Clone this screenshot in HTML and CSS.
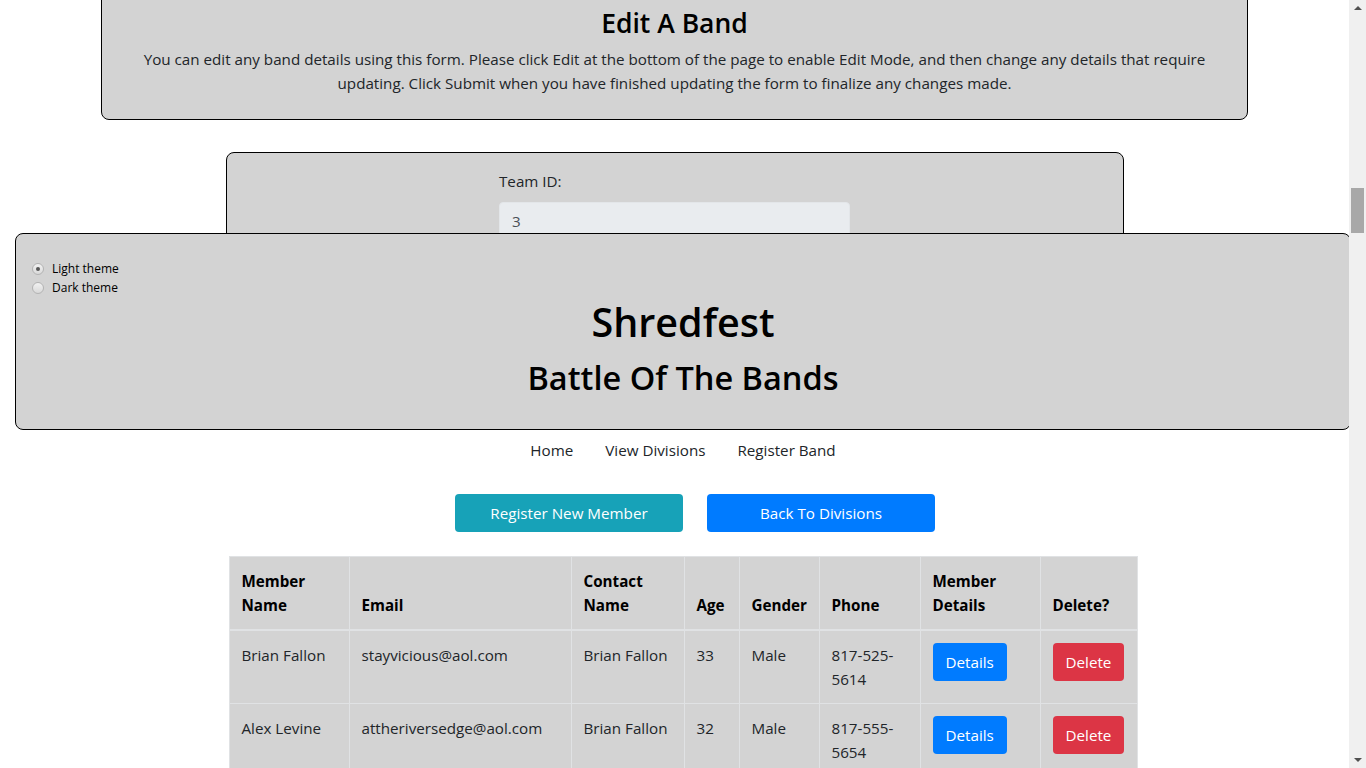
FILE: index.html
```html
<!DOCTYPE html>
<html lang="en">
<head>
<meta charset="utf-8">
<title>Edit A Band</title>
<link rel="stylesheet" href="styles.css">
</head>
<body>
<main class="page">
  <section class="intro-card">
    <h3 class="intro-title">Edit A Band</h3>
    <p class="intro-text">You can edit any band details using this form. Please click Edit at the bottom of the page to enable Edit Mode, and then change any details that require updating. Click Submit when you have finished updating the form to finalize any changes made.</p>
  </section>
  <form class="band-form">
    <div class="form-group">
      <label class="form-label" for="teamId">Team ID:</label>
      <input class="form-input" id="teamId" type="text" value="3" disabled>
    </div>
    <div class="form-group">
      <label class="form-label" for="teamName">Team Name:</label>
      <input class="form-input" id="teamName" type="text" value="The Gaslight Anthem" disabled>
    </div>
    <div class="form-group">
      <label class="form-label" for="division">Division:</label>
      <input class="form-input" id="division" type="text" value="Rock" disabled>
    </div>
  </form>
</main>

<div class="app-layer">
  <header class="site-header">
    <div class="theme-switch">
      <label class="theme-option"><input class="theme-radio" type="radio" name="theme" checked><span>Light theme</span></label>
      <label class="theme-option"><input class="theme-radio" type="radio" name="theme"><span>Dark theme</span></label>
    </div>
    <h1 class="site-title">Shredfest</h1>
    <h2 class="site-subtitle">Battle Of The Bands</h2>
  </header>

  <nav class="site-nav">
    <a class="nav-link" href="#">Home</a>
    <a class="nav-link" href="#">View Divisions</a>
    <a class="nav-link" href="#">Register Band</a>
  </nav>

  <div class="actions">
    <button class="btn btn-wide btn-info" type="button">Register New Member</button>
    <button class="btn btn-wide btn-primary" type="button">Back To Divisions</button>
  </div>

  <table class="members">
    <colgroup>
      <col class="c-name"><col class="c-email"><col class="c-contact"><col class="c-age">
      <col class="c-gender"><col class="c-phone"><col class="c-details"><col class="c-delete">
    </colgroup>
    <thead>
      <tr>
        <th>Member Name</th>
        <th>Email</th>
        <th>Contact Name</th>
        <th>Age</th>
        <th>Gender</th>
        <th>Phone</th>
        <th>Member Details</th>
        <th>Delete?</th>
      </tr>
    </thead>
    <tbody>
      <tr>
        <td>Brian Fallon</td>
        <td>stayvicious@aol.com</td>
        <td>Brian Fallon</td>
        <td>33</td>
        <td>Male</td>
        <td>817-525-5614</td>
        <td><button class="btn btn-primary" type="button">Details</button></td>
        <td><button class="btn btn-danger" type="button">Delete</button></td>
      </tr>
      <tr>
        <td>Alex Levine</td>
        <td>attheriversedge@aol.com</td>
        <td>Brian Fallon</td>
        <td>32</td>
        <td>Male</td>
        <td>817-555-5654</td>
        <td><button class="btn btn-primary" type="button">Details</button></td>
        <td><button class="btn btn-danger" type="button">Delete</button></td>
      </tr>
    </tbody>
  </table>
</div>

<div class="scrollbar">
  <div class="scroll-arrow scroll-up"></div>
  <div class="scroll-thumb"></div>
  <div class="scroll-arrow scroll-down"></div>
</div>
</body>
</html>
```

FILE: styles.css
```css
html, body {
  margin: 0;
  padding: 0;
  overflow: hidden;
  height: 100%;
}

body {
  background: #ffffff;
  color: #212529;
  font-family: "Open Sans", "Noto Sans", Arial, sans-serif;
  font-size: 15.2px;
  line-height: 24px;
}

.page {
  width: 1349px;
}

.intro-card {
  width: 1147px;
  box-sizing: border-box;
  margin: -10px auto 0;
  padding: 17px 16px 8px;
  background: #d3d3d3;
  border: 1px solid #000;
  border-radius: 8px;
  text-align: center;
}

.intro-title {
  margin: 0 0 7px;
  font-size: 26.5px;
  font-weight: 600;
  line-height: 1.2;
  color: #000;
}

.intro-text {
  margin: 0 0 16px;
}

.band-form {
  width: 898px;
  box-sizing: border-box;
  margin: 32px auto 0;
  padding: 16px 0 40px;
  background: #d3d3d3;
  border: 1px solid #000;
  border-radius: 8px;
  min-height: 700px;
}

.form-group {
  width: 351px;
  margin: 0 auto 16px;
}

.form-label {
  display: block;
  margin-bottom: 9px;
}

.form-input {
  display: block;
  width: 100%;
  box-sizing: border-box;
  height: 38px;
  padding: 6px 12px;
  font: inherit;
  color: #495057;
  background: #e9ecef;
  border: 1px solid #e3e6e9;
  border-radius: 4px;
}

/* overlay layer */
.app-layer {
  position: fixed;
  top: 233px;
  left: 0;
  right: 0;
  bottom: 0;
  background: #ffffff;
}

.site-header {
  margin: 0 15px;
  padding: 25px 16px 32px;
  background: #d3d3d3;
  border: 1px solid #000;
  border-radius: 8px;
  text-align: center;
}

.theme-switch {
  display: flex;
  flex-direction: column;
  align-items: flex-start;
  font-size: 12px;
  line-height: 19px;
  color: #000;
}

.theme-option {
  display: flex;
  align-items: center;
}

.theme-radio {
  -webkit-appearance: none;
  appearance: none;
  box-sizing: border-box;
  width: 12px;
  height: 12px;
  margin: 0 8px 0 0;
  border: 1px solid #b3b3b3;
  border-radius: 50%;
  background: linear-gradient(#f2f2f2, #d9d9d9);
  display: grid;
  place-items: center;
}

.theme-radio:checked::after {
  content: "";
  width: 4px;
  height: 4px;
  border-radius: 50%;
  background: #555555;
}

.site-title {
  margin: 2px 0 0;
  font-size: 39.5px;
  font-weight: 600;
  line-height: 1.2;
  color: #000;
}

.site-subtitle {
  margin: 12px 0 0;
  font-size: 32.5px;
  font-weight: 600;
  line-height: 1.2;
  color: #000;
}

.site-nav {
  display: flex;
  justify-content: center;
}

.nav-link {
  padding: 8px 16px;
  color: #212529;
  text-decoration: none;
}

.actions {
  display: flex;
  justify-content: center;
  gap: 24px;
  margin-top: 24px;
  padding-left: 24px;
}

.btn {
  display: inline-block;
  padding: 6px 12px;
  font: inherit;
  line-height: 24px;
  color: #fff;
  border: 1px solid transparent;
  border-radius: 4px;
  cursor: pointer;
}

.btn-wide {
  width: 228px;
}

.btn-info {
  background: #17a2b8;
}

.btn-primary {
  background: #007bff;
}

.btn-danger {
  background: #dc3545;
}

.members {
  width: 908px;
  margin: 24px auto 0;
  table-layout: fixed;
  border-collapse: collapse;
  background: #d3d3d3;
  color: #212529;
}

.c-name { width: 120px; }
.c-email { width: 222px; }
.c-contact { width: 113px; }
.c-age { width: 55px; }
.c-gender { width: 80px; }
.c-phone { width: 101px; }
.c-details { width: 120px; }
.c-delete { width: 97px; }

.members th,
.members td {
  padding: 12px;
  border: 1px solid #e0e2e4;
  text-align: left;
  vertical-align: top;
}

.members th {
  vertical-align: bottom;
  border-bottom-width: 2px;
  font-weight: 700;
  color: #000;
}

/* fake window scrollbar */
.scrollbar {
  position: fixed;
  top: 0;
  right: 0;
  width: 17px;
  height: 100%;
  background: #f0f0f0;
}

.scroll-arrow {
  position: absolute;
  left: 5px;
  width: 0;
  height: 0;
  border-left: 4px solid transparent;
  border-right: 4px solid transparent;
}

.scroll-up {
  top: 6px;
  border-bottom: 4px solid #505050;
}

.scroll-down {
  bottom: 6px;
  border-top: 4px solid #505050;
}

.scroll-thumb {
  position: absolute;
  left: 2px;
  top: 188px;
  width: 13px;
  height: 45px;
  background: #a8a8a8;
}
```
